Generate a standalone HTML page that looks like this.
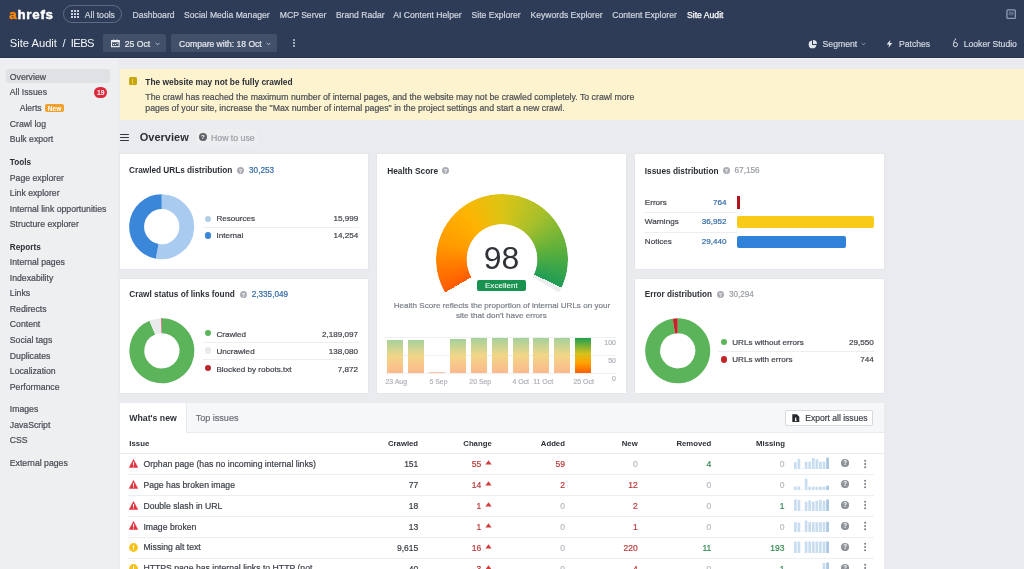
<!DOCTYPE html>
<html><head><meta charset="utf-8"><style>
html,body{margin:0;padding:0;}
body{width:1024px;height:569px;overflow:hidden;position:relative;font-family:"Liberation Sans", sans-serif;background:#e9ebee;}
.t{position:absolute;white-space:nowrap;line-height:1;-webkit-text-stroke-width:0.2px;}
</style></head><body>
<div style="position:absolute;left:0;top:0;width:1024px;height:569px;will-change:transform;">
<div style="position:absolute;left:0.00px;top:58.00px;width:118.00px;height:511.00px;background:#eeeff1;"></div>
<div style="position:absolute;left:118.00px;top:58.00px;width:906.00px;height:511.00px;background:#e9ebee;"></div>
<div style="position:absolute;left:0.00px;top:0.00px;width:1024.00px;height:58.00px;background:#2f3c57;"></div>
<div style="position:absolute;left:0.00px;top:57.00px;width:1024.00px;height:1.00px;background:#27324a;"></div>
<div style="position:absolute;left:0.00px;top:58.00px;width:1024.00px;height:1.00px;background:#f3f4f6;"></div>
<div class="t" style="left:9.30px;top:7.94px;font-size:13.3px;color:#ffffff;font-weight:700;-webkit-text-stroke-width:0;letter-spacing:0.75px;-webkit-text-stroke:0.45px #fff;"><span style="color:#ff8a00;-webkit-text-stroke:0.45px #ff8a00">a</span>hrefs</div>
<div style="position:absolute;left:63.20px;top:5.20px;width:59.20px;height:18.10px;border:1px solid #5f6b85;border-radius:10px;box-sizing:border-box;"></div>
<div style="position:absolute;left:71.20px;top:10.40px;width:2.10px;height:2.10px;background:#c9cfdb;"></div>
<div style="position:absolute;left:71.20px;top:13.40px;width:2.10px;height:2.10px;background:#c9cfdb;"></div>
<div style="position:absolute;left:71.20px;top:16.40px;width:2.10px;height:2.10px;background:#c9cfdb;"></div>
<div style="position:absolute;left:74.20px;top:10.40px;width:2.10px;height:2.10px;background:#c9cfdb;"></div>
<div style="position:absolute;left:74.20px;top:13.40px;width:2.10px;height:2.10px;background:#c9cfdb;"></div>
<div style="position:absolute;left:74.20px;top:16.40px;width:2.10px;height:2.10px;background:#c9cfdb;"></div>
<div style="position:absolute;left:77.20px;top:10.40px;width:2.10px;height:2.10px;background:#c9cfdb;"></div>
<div style="position:absolute;left:77.20px;top:13.40px;width:2.10px;height:2.10px;background:#c9cfdb;"></div>
<div style="position:absolute;left:77.20px;top:16.40px;width:2.10px;height:2.10px;background:#c9cfdb;"></div>
<div class="t" style="left:84.80px;top:10.82px;font-size:8.6px;color:#d0d6e0;">All tools</div>
<div class="t" style="left:132.50px;top:11.32px;font-size:8.6px;color:#d0d6e0;">Dashboard</div>
<div class="t" style="left:184.10px;top:11.32px;font-size:8.6px;color:#d0d6e0;">Social Media Manager</div>
<div class="t" style="left:279.80px;top:11.32px;font-size:8.6px;color:#d0d6e0;">MCP Server</div>
<div class="t" style="left:335.90px;top:11.32px;font-size:8.6px;color:#d0d6e0;">Brand Radar</div>
<div class="t" style="left:393.30px;top:11.32px;font-size:8.6px;color:#d0d6e0;">AI Content Helper</div>
<div class="t" style="left:471.50px;top:11.32px;font-size:8.6px;color:#d0d6e0;">Site Explorer</div>
<div class="t" style="left:530.50px;top:11.32px;font-size:8.6px;color:#d0d6e0;">Keywords Explorer</div>
<div class="t" style="left:612.30px;top:11.32px;font-size:8.6px;color:#d0d6e0;">Content Explorer</div>
<div class="t" style="left:687.00px;top:11.28px;font-size:8.65px;color:#ffffff;-webkit-text-stroke:0.25px #fff;">Site Audit</div>
<svg style="position:absolute;left:1006.2px;top:8.8px" width="11" height="11" viewBox="0 0 11 11"><rect x="0.95" y="0.95" width="8.4" height="8.4" rx="0.9" fill="none" stroke="#8f9cb8" stroke-width="1.3"/><path d="M2.6 2.6 H7.7 V6.3 H5.8 L5.15 7.1 L4.5 6.3 H2.6 Z" fill="#8f9cb8" opacity="0.45"/></svg>
<div class="t" style="left:9.70px;top:38.42px;font-size:11.2px;color:#f4f6f9;-webkit-text-stroke-width:0;">Site Audit</div>
<div class="t" style="left:62.60px;top:38.42px;font-size:11.2px;color:#f4f6f9;-webkit-text-stroke-width:0;">/</div>
<div class="t" style="left:70.80px;top:38.42px;font-size:11.2px;color:#f4f6f9;letter-spacing:-0.6px;-webkit-text-stroke-width:0;">IEBS</div>
<div style="position:absolute;left:103.20px;top:34.40px;width:62.60px;height:17.90px;background:#435069;border-radius:2px;"></div>
<div style="position:absolute;left:170.90px;top:34.40px;width:106.60px;height:17.90px;background:#435069;border-radius:2px;"></div>
<svg style="position:absolute;left:110.8px;top:38.6px" width="9" height="9" viewBox="0 0 9 9"><rect x="0.55" y="1.75" width="7.6" height="5.9" fill="none" stroke="#eef1f5" stroke-width="1.1"/><rect x="0" y="1.2" width="8.7" height="2" fill="#eef1f5"/><rect x="2.3" y="0.4" width="0.9" height="1.2" fill="#eef1f5"/><rect x="5.6" y="0.4" width="0.9" height="1.2" fill="#eef1f5"/><rect x="2.1" y="4.9" width="1" height="1.1" fill="#eef1f5"/><rect x="3.9" y="4.9" width="1" height="1.1" fill="#eef1f5"/><rect x="5.7" y="3.9" width="1" height="1" fill="#eef1f5"/></svg>
<div class="t" style="left:124.70px;top:40.14px;font-size:8.7px;color:#e6e9ef;">25 Oct</div>
<svg style="position:absolute;left:154.5px;top:41.8px" width="5" height="4" viewBox="0 0 5 4"><path d="M0.7 1 L2.5 2.8 L4.3 1" fill="none" stroke="#c9cfdb" stroke-width="0.9"/></svg>
<div class="t" style="left:179.10px;top:40.26px;font-size:8.55px;color:#e6e9ef;">Compare with: 18 Oct</div>
<svg style="position:absolute;left:266px;top:41.8px" width="5" height="4" viewBox="0 0 5 4"><path d="M0.7 1 L2.5 2.8 L4.3 1" fill="none" stroke="#c9cfdb" stroke-width="0.9"/></svg>
<div style="position:absolute;left:293.20px;top:38.80px;width:2.00px;height:2.00px;background:#c9cfdb;border-radius:1px;"></div>
<div style="position:absolute;left:293.20px;top:42.00px;width:2.00px;height:2.00px;background:#c9cfdb;border-radius:1px;"></div>
<div style="position:absolute;left:293.20px;top:45.20px;width:2.00px;height:2.00px;background:#c9cfdb;border-radius:1px;"></div>
<svg style="position:absolute;left:808px;top:39.5px" width="9" height="9" viewBox="0 0 9 9"><path d="M4 0.6 A3.9 3.9 0 1 0 8.4 5 L4 5 Z" fill="#dfe3ea"/><path d="M5 0 A4 4 0 0 1 9 4 L5 4 Z" fill="#dfe3ea"/></svg>
<div class="t" style="left:822.50px;top:40.24px;font-size:8.7px;color:#d0d6e0;">Segment</div>
<svg style="position:absolute;left:860.5px;top:42px" width="5" height="4" viewBox="0 0 5 4"><path d="M0.7 1 L2.5 2.8 L4.3 1" fill="none" stroke="#9aa3b6" stroke-width="0.9"/></svg>
<svg style="position:absolute;left:886.2px;top:39.8px" width="7" height="8" viewBox="0 0 7 8"><path d="M4.3 0 L0.6 4.6 H3.1 L2.4 7.8 L6.4 3.1 H3.9 Z" fill="#dfe3ea"/></svg>
<div class="t" style="left:899.00px;top:40.28px;font-size:8.65px;color:#d0d6e0;">Patches</div>
<svg style="position:absolute;left:951.8px;top:38.2px" width="7" height="10" viewBox="0 0 7 10"><circle cx="3.4" cy="6.6" r="2.1" fill="none" stroke="#dfe3ea" stroke-width="1.0"/><path d="M2.0 4.9 C1.4 3.4 2.4 2.2 3.6 1.6 M3.4 0.5 V2.0" fill="none" stroke="#dfe3ea" stroke-width="0.9"/></svg>
<div class="t" style="left:963.70px;top:40.28px;font-size:8.65px;color:#d0d6e0;">Looker Studio</div>
<div style="position:absolute;left:5.60px;top:68.90px;width:104.00px;height:14.40px;background:#dfe1e5;border-radius:3px;"></div>
<div class="t" style="left:9.80px;top:72.74px;font-size:8.7px;color:#464b53;">Overview</div>
<div class="t" style="left:9.80px;top:88.04px;font-size:8.7px;color:#464b53;">All Issues</div>
<div class="t" style="left:9.80px;top:120.04px;font-size:8.7px;color:#464b53;">Crawl log</div>
<div class="t" style="left:9.80px;top:135.24px;font-size:8.7px;color:#464b53;">Bulk export</div>
<div class="t" style="left:9.80px;top:158.66px;font-size:8.2px;color:#2b2f36;font-weight:700;-webkit-text-stroke-width:0;">Tools</div>
<div class="t" style="left:9.80px;top:173.64px;font-size:8.7px;color:#464b53;">Page explorer</div>
<div class="t" style="left:9.80px;top:189.24px;font-size:8.7px;color:#464b53;">Link explorer</div>
<div class="t" style="left:9.80px;top:204.74px;font-size:8.7px;color:#464b53;">Internal link opportunities</div>
<div class="t" style="left:9.80px;top:220.14px;font-size:8.7px;color:#464b53;">Structure explorer</div>
<div class="t" style="left:9.80px;top:243.56px;font-size:8.2px;color:#2b2f36;font-weight:700;-webkit-text-stroke-width:0;">Reports</div>
<div class="t" style="left:9.80px;top:258.34px;font-size:8.7px;color:#464b53;">Internal pages</div>
<div class="t" style="left:9.80px;top:273.94px;font-size:8.7px;color:#464b53;">Indexability</div>
<div class="t" style="left:9.80px;top:289.34px;font-size:8.7px;color:#464b53;">Links</div>
<div class="t" style="left:9.80px;top:305.24px;font-size:8.7px;color:#464b53;">Redirects</div>
<div class="t" style="left:9.80px;top:320.44px;font-size:8.7px;color:#464b53;">Content</div>
<div class="t" style="left:9.80px;top:335.74px;font-size:8.7px;color:#464b53;">Social tags</div>
<div class="t" style="left:9.80px;top:351.64px;font-size:8.7px;color:#464b53;">Duplicates</div>
<div class="t" style="left:9.80px;top:367.04px;font-size:8.7px;color:#464b53;">Localization</div>
<div class="t" style="left:9.80px;top:382.64px;font-size:8.7px;color:#464b53;">Performance</div>
<div class="t" style="left:9.80px;top:405.04px;font-size:8.7px;color:#464b53;">Images</div>
<div class="t" style="left:9.80px;top:420.64px;font-size:8.7px;color:#464b53;">JavaScript</div>
<div class="t" style="left:9.80px;top:436.04px;font-size:8.7px;color:#464b53;">CSS</div>
<div class="t" style="left:9.80px;top:458.84px;font-size:8.7px;color:#464b53;">External pages</div>
<div class="t" style="left:19.70px;top:104.02px;font-size:8.6px;color:#464b53;">Alerts</div>
<div style="position:absolute;left:45.20px;top:104.30px;width:18.70px;height:7.80px;background:#f2a12e;border-radius:2px;"></div>
<div class="t" style="left:54.55px;transform:translateX(-50%);top:105.51px;font-size:6.6px;color:#ffffff;font-weight:700;-webkit-text-stroke-width:0;">New</div>
<div style="position:absolute;left:94.10px;top:87.20px;width:13.30px;height:10.50px;background:#dc2a3c;border-radius:6px;"></div>
<div class="t" style="left:100.80px;transform:translateX(-50%);top:90.04px;font-size:6.8px;color:#ffffff;font-weight:700;-webkit-text-stroke-width:0;">19</div>
<div style="position:absolute;left:120.00px;top:68.80px;width:904.00px;height:50.90px;background:#fdf3cf;"></div>
<div style="position:absolute;left:128.70px;top:77.30px;width:8.40px;height:8.20px;background:#c6a712;border-radius:1.5px;"></div>
<div style="position:absolute;left:132.40px;top:79.40px;width:1.10px;height:3.20px;background:#ecd040;"></div>
<div style="position:absolute;left:132.40px;top:83.20px;width:1.10px;height:0.80px;background:#ecd040;"></div>
<div class="t" style="left:145.30px;top:77.51px;font-size:8.37px;color:#2b2f36;font-weight:700;-webkit-text-stroke-width:0;">The website may not be fully crawled</div>
<div class="t" style="left:145.30px;top:92.80px;font-size:8.74px;color:#4a4e55;">The crawl has reached the maximum number of internal pages, and the website may not be crawled completely. To crawl more</div>
<div class="t" style="left:145.30px;top:103.67px;font-size:8.78px;color:#4a4e55;">pages of your site, increase the "Max number of internal pages" in the project settings and start a new crawl.</div>
<div style="position:absolute;left:120.30px;top:133.80px;width:8.90px;height:1.30px;background:#30343b;border-radius:0.5px;"></div>
<div style="position:absolute;left:120.30px;top:136.80px;width:8.90px;height:1.30px;background:#30343b;border-radius:0.5px;"></div>
<div style="position:absolute;left:120.30px;top:139.80px;width:8.90px;height:1.30px;background:#30343b;border-radius:0.5px;"></div>
<div class="t" style="left:139.80px;top:132.49px;font-size:11.0px;color:#2b2f36;font-weight:700;-webkit-text-stroke-width:0;">Overview</div>
<div style="position:absolute;left:196.00px;top:129.00px;width:61.00px;height:15.50px;background:#eceef0;border-radius:2px;"></div>
<svg style="position:absolute;left:198.8px;top:133.2px" width="8" height="8" viewBox="0 0 8 8"><circle cx="4" cy="4" r="4" fill="#5e6268"/><text x="4" y="6.4" font-size="6.2" font-family="Liberation Sans" font-weight="700" fill="#fff" text-anchor="middle">?</text></svg>
<div class="t" style="left:211.00px;top:133.51px;font-size:8.73px;color:#9a9ea5;">How to use</div>
<div style="position:absolute;left:119.50px;top:153.80px;width:248.60px;height:115.00px;background:#ffffff;box-shadow:0 0 0 0.6px #e1e3e6;"></div>
<div style="position:absolute;left:376.60px;top:153.80px;width:249.80px;height:238.90px;background:#ffffff;box-shadow:0 0 0 0.6px #e1e3e6;"></div>
<div style="position:absolute;left:634.80px;top:153.80px;width:249.00px;height:115.00px;background:#ffffff;box-shadow:0 0 0 0.6px #e1e3e6;"></div>
<div style="position:absolute;left:119.50px;top:279.00px;width:248.60px;height:113.70px;background:#ffffff;box-shadow:0 0 0 0.6px #e1e3e6;"></div>
<div style="position:absolute;left:634.80px;top:279.00px;width:249.00px;height:113.70px;background:#ffffff;box-shadow:0 0 0 0.6px #e1e3e6;"></div>
<div class="t" style="left:129.10px;top:166.83px;font-size:8.23px;color:#2b2f36;font-weight:700;-webkit-text-stroke-width:0;">Crawled URLs distribution</div>
<svg style="position:absolute;left:236.7px;top:166.6px" width="7" height="7" viewBox="0 0 8 8"><circle cx="4" cy="4" r="4" fill="#a9adb3"/><text x="4" y="6.4" font-size="6.2" font-family="Liberation Sans" font-weight="700" fill="#fff" text-anchor="middle">?</text></svg>
<div class="t" style="left:249.10px;top:166.80px;font-size:8.15px;color:#336aa8;">30,253</div>
<svg style="position:absolute;left:0;top:0" width="1024" height="569"><path d="M161.700 201.650 A25.05 25.05 0 1 1 157.161 251.335" fill="none" stroke="#a9cbef" stroke-width="14.899999999999999"/><path d="M157.161 251.335 A25.05 25.05 0 0 1 161.700 201.650" fill="none" stroke="#3a86d9" stroke-width="14.899999999999999"/></svg>
<div style="position:absolute;left:205.10px;top:215.50px;width:6.20px;height:6.20px;background:#b3cde6;border-radius:50%;"></div>
<div class="t" style="left:216.40px;top:215.34px;font-size:8.1px;color:#3f434a;">Resources</div>
<div class="t" style="right:665.80px;top:215.34px;font-size:8.1px;color:#3f434a;">15,999</div>
<div style="position:absolute;left:203.00px;top:226.60px;width:155.50px;height:0.80px;background:#eceef0;"></div>
<div style="position:absolute;left:205.10px;top:232.40px;width:6.20px;height:6.20px;background:#3a86d9;border-radius:50%;"></div>
<div class="t" style="left:216.40px;top:232.24px;font-size:8.1px;color:#3f434a;">Internal</div>
<div class="t" style="right:665.80px;top:232.24px;font-size:8.1px;color:#3f434a;">14,254</div>
<div class="t" style="left:129.30px;top:290.82px;font-size:8.25px;color:#2b2f36;font-weight:700;-webkit-text-stroke-width:0;">Crawl status of links found</div>
<svg style="position:absolute;left:239.6px;top:290.6px" width="7" height="7" viewBox="0 0 8 8"><circle cx="4" cy="4" r="4" fill="#a9adb3"/><text x="4" y="6.4" font-size="6.2" font-family="Liberation Sans" font-weight="700" fill="#fff" text-anchor="middle">?</text></svg>
<div class="t" style="left:251.80px;top:290.80px;font-size:8.15px;color:#336aa8;">2,335,049</div>
<svg style="position:absolute;left:0;top:0" width="1024" height="569"><path d="M161.900 325.750 A25.05 25.05 0 1 1 152.328 327.651" fill="none" stroke="#5bb35a" stroke-width="14.899999999999999"/><path d="M152.328 327.651 A25.05 25.05 0 0 1 161.381 325.755" fill="none" stroke="#e9eaec" stroke-width="14.899999999999999"/><path d="M161.381 325.755 A25.05 25.05 0 0 1 161.900 325.750" fill="none" stroke="#c0252a" stroke-width="14.899999999999999"/></svg>
<div style="position:absolute;left:205.30px;top:330.30px;width:6.20px;height:6.20px;background:#5bb35a;border-radius:50%;"></div>
<div class="t" style="left:216.40px;top:330.64px;font-size:8.1px;color:#3f434a;">Crawled</div>
<div class="t" style="right:666.00px;top:330.64px;font-size:8.1px;color:#3f434a;">2,189,097</div>
<div style="position:absolute;left:203.00px;top:342.10px;width:155.50px;height:0.80px;background:#eceef0;"></div>
<div style="position:absolute;left:205.30px;top:347.40px;width:6.20px;height:6.20px;background:#e9eaec;border-radius:50%;"></div>
<div class="t" style="left:216.40px;top:347.74px;font-size:8.1px;color:#3f434a;">Uncrawled</div>
<div class="t" style="right:666.00px;top:347.74px;font-size:8.1px;color:#3f434a;">138,080</div>
<div style="position:absolute;left:203.00px;top:358.60px;width:155.50px;height:0.80px;background:#eceef0;"></div>
<div style="position:absolute;left:205.30px;top:365.20px;width:6.20px;height:6.20px;background:#c0252a;border-radius:50%;"></div>
<div class="t" style="left:216.40px;top:365.54px;font-size:8.1px;color:#3f434a;">Blocked by robots.txt</div>
<div class="t" style="right:666.00px;top:365.54px;font-size:8.1px;color:#3f434a;">7,872</div>
<div class="t" style="left:644.80px;top:290.89px;font-size:8.16px;color:#2b2f36;font-weight:700;-webkit-text-stroke-width:0;">Error distribution</div>
<svg style="position:absolute;left:716.8px;top:290.6px" width="7" height="7" viewBox="0 0 8 8"><circle cx="4" cy="4" r="4" fill="#a9adb3"/><text x="4" y="6.4" font-size="6.2" font-family="Liberation Sans" font-weight="700" fill="#fff" text-anchor="middle">?</text></svg>
<div class="t" style="left:729.00px;top:290.80px;font-size:8.15px;color:#9a9ea5;">30,294</div>
<svg style="position:absolute;left:0;top:0" width="1024" height="569"><path d="M677.700 325.750 A25.05 25.05 0 1 1 673.844 326.049" fill="none" stroke="#5bb35a" stroke-width="14.899999999999999"/><path d="M673.844 326.049 A25.05 25.05 0 0 1 677.700 325.750" fill="none" stroke="#c0252a" stroke-width="14.899999999999999"/></svg>
<div style="position:absolute;left:721.00px;top:339.30px;width:6.20px;height:6.20px;background:#5bb35a;border-radius:50%;"></div>
<div class="t" style="left:732.20px;top:339.14px;font-size:8.1px;color:#3f434a;">URLs without errors</div>
<div class="t" style="right:150.20px;top:339.14px;font-size:8.1px;color:#3f434a;">29,550</div>
<div style="position:absolute;left:718.00px;top:350.60px;width:156.00px;height:0.80px;background:#eceef0;"></div>
<div style="position:absolute;left:721.00px;top:356.40px;width:6.20px;height:6.20px;background:#c0252a;border-radius:50%;"></div>
<div class="t" style="left:732.20px;top:356.24px;font-size:8.1px;color:#3f434a;">URLs with errors</div>
<div class="t" style="right:150.20px;top:356.24px;font-size:8.1px;color:#3f434a;">744</div>
<div class="t" style="left:644.80px;top:166.77px;font-size:8.31px;color:#2b2f36;font-weight:700;-webkit-text-stroke-width:0;">Issues distribution</div>
<svg style="position:absolute;left:722.9px;top:166.6px" width="7" height="7" viewBox="0 0 8 8"><circle cx="4" cy="4" r="4" fill="#a9adb3"/><text x="4" y="6.4" font-size="6.2" font-family="Liberation Sans" font-weight="700" fill="#fff" text-anchor="middle">?</text></svg>
<div class="t" style="left:734.60px;top:166.80px;font-size:8.15px;color:#9a9ea5;">67,156</div>
<div class="t" style="left:644.80px;top:198.74px;font-size:8.1px;color:#3f434a;">Errors</div>
<div class="t" style="right:297.40px;top:198.74px;font-size:8.1px;color:#336aa8;">764</div>
<div style="position:absolute;left:737.00px;top:196.00px;width:2.50px;height:12.70px;background:#b3131c;"></div>
<div style="position:absolute;left:644.80px;top:212.20px;width:92.20px;height:0.80px;background:#eceef0;"></div>
<div class="t" style="left:644.80px;top:218.34px;font-size:8.1px;color:#3f434a;">Warnings</div>
<div class="t" style="right:297.40px;top:218.34px;font-size:8.1px;color:#336aa8;">36,952</div>
<div style="position:absolute;left:737.00px;top:215.50px;width:136.80px;height:12.70px;background:#f9ca16;border-radius:2px;"></div>
<div style="position:absolute;left:644.80px;top:231.70px;width:92.20px;height:0.80px;background:#eceef0;"></div>
<div class="t" style="left:644.80px;top:237.84px;font-size:8.1px;color:#3f434a;">Notices</div>
<div class="t" style="right:297.40px;top:237.84px;font-size:8.1px;color:#336aa8;">29,440</div>
<div style="position:absolute;left:737.00px;top:235.60px;width:108.70px;height:12.70px;background:#2f82d8;border-radius:2px;"></div>
<div class="t" style="left:387.20px;top:166.84px;font-size:8.34px;color:#2b2f36;font-weight:700;-webkit-text-stroke-width:0;">Health Score</div>
<svg style="position:absolute;left:442.2px;top:166.8px" width="7" height="7" viewBox="0 0 8 8"><circle cx="4" cy="4" r="4" fill="#a9adb3"/><text x="4" y="6.4" font-size="6.2" font-family="Liberation Sans" font-weight="700" fill="#fff" text-anchor="middle">?</text></svg>
<div style="position:absolute;left:435.95px;top:193.70px;width:131.80px;height:131.80px;background:conic-gradient(from 240deg, #ff5a00 0deg, #ff9a00 45deg, #ffb300 80deg, #dcc415 120deg, #a9c02a 160deg, #5cb03c 200deg, #1f9c55 235.2deg, #eceef0 235.2deg, #eceef0 240deg, transparent 240deg);-webkit-mask-image:radial-gradient(circle closest-side, transparent 34.90px, #000 35.70px);mask-image:radial-gradient(circle closest-side, transparent 34.90px, #000 35.70px);border-radius:50%;"></div>
<div class="t" style="left:501.50px;transform:translateX(-50%);top:241.91px;font-size:32px;color:#2f3237;-webkit-text-stroke-width:0;">98</div>
<div style="position:absolute;left:477.20px;top:279.90px;width:48.40px;height:10.70px;background:#18934f;border-radius:2px;"></div>
<div class="t" style="left:501.40px;transform:translateX(-50%);top:281.94px;font-size:8.1px;color:#ffffff;-webkit-text-stroke-width:0.05px;">Excellent</div>
<div class="t" style="left:501.90px;transform:translateX(-50%);top:302.06px;font-size:8.08px;color:#7a7f87;">Health Score reflects the proportion of internal URLs on your</div>
<div class="t" style="left:501.40px;transform:translateX(-50%);top:311.56px;font-size:8.08px;color:#7a7f87;">site that don&#39;t have errors</div>
<div style="position:absolute;left:386.00px;top:336.60px;width:230.00px;height:0.80px;background:#eef0f2;"></div>
<div style="position:absolute;left:386.00px;top:354.80px;width:230.00px;height:0.80px;background:#eef0f2;"></div>
<div style="position:absolute;left:386.00px;top:372.80px;width:230.00px;height:0.80px;background:#eef0f2;"></div>
<div style="position:absolute;left:387.30px;top:340.00px;width:16.20px;height:33.00px;background:linear-gradient(#a5d19b, #f2d688 50%, #fbb88c);"></div>
<div style="position:absolute;left:408.30px;top:340.00px;width:16.20px;height:33.00px;background:linear-gradient(#a5d19b, #f2d688 50%, #fbb88c);"></div>
<div style="position:absolute;left:429.00px;top:372.30px;width:16.20px;height:0.90px;background:#f5c7a6;"></div>
<div style="position:absolute;left:450.20px;top:338.80px;width:16.20px;height:34.20px;background:linear-gradient(#a5d19b, #f2d688 50%, #fbb88c);"></div>
<div style="position:absolute;left:471.00px;top:337.60px;width:16.20px;height:35.40px;background:linear-gradient(#a5d19b, #f2d688 50%, #fbb88c);"></div>
<div style="position:absolute;left:491.70px;top:337.60px;width:16.20px;height:35.40px;background:linear-gradient(#a5d19b, #f2d688 50%, #fbb88c);"></div>
<div style="position:absolute;left:512.50px;top:337.60px;width:16.20px;height:35.40px;background:linear-gradient(#a5d19b, #f2d688 50%, #fbb88c);"></div>
<div style="position:absolute;left:533.30px;top:337.60px;width:16.20px;height:35.40px;background:linear-gradient(#a5d19b, #f2d688 50%, #fbb88c);"></div>
<div style="position:absolute;left:554.00px;top:337.60px;width:16.20px;height:35.40px;background:linear-gradient(#a5d19b, #f2d688 50%, #fbb88c);"></div>
<div style="position:absolute;left:574.80px;top:337.60px;width:16.30px;height:35.40px;background:linear-gradient(#20a050, #d6c21c 45%, #ffa400 70%, #ff5e00);"></div>
<div class="t" style="right:408.20px;top:340.36px;font-size:6.9px;color:#aeb2b8;">100</div>
<div class="t" style="right:408.20px;top:357.56px;font-size:6.9px;color:#aeb2b8;">50</div>
<div class="t" style="right:408.20px;top:375.76px;font-size:6.9px;color:#aeb2b8;">0</div>
<div class="t" style="left:385.50px;top:378.76px;font-size:6.9px;color:#aeb2b8;">23 Aug</div>
<div class="t" style="left:429.50px;top:378.76px;font-size:6.9px;color:#aeb2b8;">5 Sep</div>
<div class="t" style="left:469.30px;top:378.76px;font-size:6.9px;color:#aeb2b8;">20 Sep</div>
<div class="t" style="left:512.50px;top:378.76px;font-size:6.9px;color:#aeb2b8;">4 Oct</div>
<div class="t" style="left:533.30px;top:378.76px;font-size:6.9px;color:#aeb2b8;">11 Oct</div>
<div class="t" style="left:573.50px;top:378.76px;font-size:6.9px;color:#aeb2b8;">25 Oct</div>
<div style="position:absolute;left:119.50px;top:402.50px;width:764.50px;height:166.50px;background:#ffffff;"></div>
<div style="position:absolute;left:119.50px;top:402.50px;width:764.50px;height:29.90px;background:#f6f7f8;"></div>
<div style="position:absolute;left:119.50px;top:402.50px;width:764.50px;height:29.90px;background:#f6f7f8;"></div>
<div style="position:absolute;left:119.50px;top:431.80px;width:764.50px;height:0.80px;background:#e8eaed;"></div>
<div style="position:absolute;left:119.50px;top:402.50px;width:66.50px;height:30.50px;background:#ffffff;"></div>
<div style="position:absolute;left:185.80px;top:402.50px;width:0.80px;height:30.10px;background:#e8eaed;"></div>
<div class="t" style="left:129.30px;top:414.44px;font-size:8.7px;color:#2b2f36;font-weight:700;-webkit-text-stroke-width:0;">What&#39;s new</div>
<div class="t" style="left:195.70px;top:414.14px;font-size:9.05px;color:#6c7078;">Top issues</div>
<div style="position:absolute;left:785.20px;top:410.10px;width:88.30px;height:15.70px;background:#ffffff;border:0.8px solid #d6d9dd;border-radius:2px;box-sizing:border-box;"></div>
<svg style="position:absolute;left:792px;top:413.8px" width="8" height="9" viewBox="0 0 8 9"><path d="M0.3 0.3 H4.9 L7.3 2.7 V8.1 H0.3 Z" fill="#25282d"/><path d="M3.7 3.4 V6.6" stroke="#fff" stroke-width="1.1"/><circle cx="3.7" cy="6.3" r="0.9" fill="#fff"/></svg>
<div class="t" style="left:805.20px;top:414.06px;font-size:8.55px;color:#3a3f47;">Export all issues</div>
<div class="t" style="left:129.30px;top:440.10px;font-size:7.8px;color:#2b2f36;font-weight:700;-webkit-text-stroke-width:0;">Issue</div>
<div class="t" style="right:605.90px;top:440.14px;font-size:7.75px;color:#2b2f36;font-weight:700;-webkit-text-stroke-width:0;">Crawled</div>
<div class="t" style="right:532.30px;top:440.14px;font-size:7.75px;color:#2b2f36;font-weight:700;-webkit-text-stroke-width:0;">Change</div>
<div class="t" style="right:459.10px;top:440.14px;font-size:7.75px;color:#2b2f36;font-weight:700;-webkit-text-stroke-width:0;">Added</div>
<div class="t" style="right:386.30px;top:440.14px;font-size:7.75px;color:#2b2f36;font-weight:700;-webkit-text-stroke-width:0;">New</div>
<div class="t" style="right:312.70px;top:440.14px;font-size:7.75px;color:#2b2f36;font-weight:700;-webkit-text-stroke-width:0;">Removed</div>
<div class="t" style="right:239.10px;top:440.14px;font-size:7.75px;color:#2b2f36;font-weight:700;-webkit-text-stroke-width:0;">Missing</div>
<div style="position:absolute;left:119.50px;top:452.60px;width:764.50px;height:0.80px;background:#e8eaec;"></div>
<svg style="position:absolute;left:128.8px;top:458.70px" width="9" height="9" viewBox="0 0 9 9"><path d="M4.5 0.4 L8.8 8.4 H0.2 Z" fill="#e0353f" stroke="#e0353f" stroke-width="0.5" stroke-linejoin="round"/><rect x="4" y="3" width="1" height="3" fill="#fff"/><rect x="4" y="6.6" width="1" height="1" fill="#fff"/></svg>
<div class="t" style="left:143.40px;top:459.84px;font-size:8.69px;color:#3a3f47;">Orphan page (has no incoming internal links)</div>
<div class="t" style="right:605.70px;top:460.00px;font-size:8.5px;color:#3a3f47;">151</div>
<div class="t" style="right:542.70px;top:460.00px;font-size:8.5px;color:#bb3a3c;">55</div>
<svg style="position:absolute;left:485.2px;top:460.40px" width="7" height="5" viewBox="0 0 7 5"><path d="M3.5 0.3 L6.6 4.5 H0.4 Z" fill="#d33a3a"/></svg>
<div class="t" style="right:459.10px;top:460.00px;font-size:8.5px;color:#bb3a3c;">59</div>
<div class="t" style="right:386.30px;top:460.00px;font-size:8.5px;color:#b4b8bd;">0</div>
<div class="t" style="right:312.70px;top:460.00px;font-size:8.5px;color:#378a55;">4</div>
<div class="t" style="right:239.60px;top:460.00px;font-size:8.5px;color:#b4b8bd;">0</div>
<svg style="position:absolute;left:794.1px;top:455.45px" width="40" height="14" viewBox="0 0 40 14"><rect x="0.00" y="7.30" width="2.7" height="6.70" fill="#c8ddf0"/><rect x="3.58" y="3.70" width="2.7" height="10.30" fill="#c8ddf0"/><rect x="7.16" y="13.60" width="2.7" height="0.40" fill="#c8ddf0"/><rect x="10.74" y="6.70" width="2.7" height="7.30" fill="#c8ddf0"/><rect x="14.32" y="6.70" width="2.7" height="7.30" fill="#c8ddf0"/><rect x="17.90" y="3.00" width="2.7" height="11.00" fill="#c8ddf0"/><rect x="21.48" y="4.30" width="2.7" height="9.70" fill="#c8ddf0"/><rect x="25.06" y="6.70" width="2.7" height="7.30" fill="#c8ddf0"/><rect x="28.64" y="6.70" width="2.7" height="7.30" fill="#c8ddf0"/><rect x="32.22" y="2.60" width="2.7" height="11.40" fill="#a8c6e2"/></svg>
<svg style="position:absolute;left:840.8px;top:459.4px" width="8.1" height="8.1" viewBox="0 0 8 8"><circle cx="4" cy="4" r="4" fill="#8d9299"/><text x="4" y="6.4" font-size="6.2" font-family="Liberation Sans" font-weight="700" fill="#fff" text-anchor="middle">?</text></svg>
<svg style="position:absolute;left:862px;top:457.50px" width="6" height="12" viewBox="0 0 6 12"><circle cx="3.1" cy="2.7" r="1.0" fill="#767a81"/><circle cx="3.1" cy="6.0" r="1.0" fill="#767a81"/><circle cx="3.1" cy="9.3" r="1.0" fill="#767a81"/></svg>
<div style="position:absolute;left:128.20px;top:474.30px;width:745.80px;height:0.80px;background:#eceef0;"></div>
<svg style="position:absolute;left:128.8px;top:479.60px" width="9" height="9" viewBox="0 0 9 9"><path d="M4.5 0.4 L8.8 8.4 H0.2 Z" fill="#e0353f" stroke="#e0353f" stroke-width="0.5" stroke-linejoin="round"/><rect x="4" y="3" width="1" height="3" fill="#fff"/><rect x="4" y="6.6" width="1" height="1" fill="#fff"/></svg>
<div class="t" style="left:143.40px;top:480.74px;font-size:8.69px;color:#3a3f47;">Page has broken image</div>
<div class="t" style="right:605.70px;top:480.90px;font-size:8.5px;color:#3a3f47;">77</div>
<div class="t" style="right:542.70px;top:480.90px;font-size:8.5px;color:#bb3a3c;">14</div>
<svg style="position:absolute;left:485.2px;top:481.30px" width="7" height="5" viewBox="0 0 7 5"><path d="M3.5 0.3 L6.6 4.5 H0.4 Z" fill="#d33a3a"/></svg>
<div class="t" style="right:459.10px;top:480.90px;font-size:8.5px;color:#bb3a3c;">2</div>
<div class="t" style="right:386.30px;top:480.90px;font-size:8.5px;color:#bb3a3c;">12</div>
<div class="t" style="right:312.70px;top:480.90px;font-size:8.5px;color:#b4b8bd;">0</div>
<div class="t" style="right:239.60px;top:480.90px;font-size:8.5px;color:#b4b8bd;">0</div>
<svg style="position:absolute;left:794.1px;top:476.35px" width="40" height="14" viewBox="0 0 40 14"><rect x="0.00" y="10.40" width="2.7" height="3.60" fill="#c8ddf0"/><rect x="3.58" y="10.40" width="2.7" height="3.60" fill="#c8ddf0"/><rect x="7.16" y="13.60" width="2.7" height="0.40" fill="#c8ddf0"/><rect x="10.74" y="2.60" width="2.7" height="11.40" fill="#c8ddf0"/><rect x="14.32" y="10.60" width="2.7" height="3.40" fill="#c8ddf0"/><rect x="17.90" y="10.60" width="2.7" height="3.40" fill="#c8ddf0"/><rect x="21.48" y="10.60" width="2.7" height="3.40" fill="#c8ddf0"/><rect x="25.06" y="10.60" width="2.7" height="3.40" fill="#c8ddf0"/><rect x="28.64" y="10.60" width="2.7" height="3.40" fill="#c8ddf0"/><rect x="32.22" y="9.70" width="2.7" height="4.30" fill="#a8c6e2"/></svg>
<svg style="position:absolute;left:840.8px;top:480.29999999999995px" width="8.1" height="8.1" viewBox="0 0 8 8"><circle cx="4" cy="4" r="4" fill="#8d9299"/><text x="4" y="6.4" font-size="6.2" font-family="Liberation Sans" font-weight="700" fill="#fff" text-anchor="middle">?</text></svg>
<svg style="position:absolute;left:862px;top:478.40px" width="6" height="12" viewBox="0 0 6 12"><circle cx="3.1" cy="2.7" r="1.0" fill="#767a81"/><circle cx="3.1" cy="6.0" r="1.0" fill="#767a81"/><circle cx="3.1" cy="9.3" r="1.0" fill="#767a81"/></svg>
<div style="position:absolute;left:128.20px;top:495.20px;width:745.80px;height:0.80px;background:#eceef0;"></div>
<svg style="position:absolute;left:128.8px;top:500.50px" width="9" height="9" viewBox="0 0 9 9"><path d="M4.5 0.4 L8.8 8.4 H0.2 Z" fill="#e0353f" stroke="#e0353f" stroke-width="0.5" stroke-linejoin="round"/><rect x="4" y="3" width="1" height="3" fill="#fff"/><rect x="4" y="6.6" width="1" height="1" fill="#fff"/></svg>
<div class="t" style="left:143.40px;top:501.64px;font-size:8.69px;color:#3a3f47;">Double slash in URL</div>
<div class="t" style="right:605.70px;top:501.80px;font-size:8.5px;color:#3a3f47;">18</div>
<div class="t" style="right:542.70px;top:501.80px;font-size:8.5px;color:#bb3a3c;">1</div>
<svg style="position:absolute;left:485.2px;top:502.20px" width="7" height="5" viewBox="0 0 7 5"><path d="M3.5 0.3 L6.6 4.5 H0.4 Z" fill="#d33a3a"/></svg>
<div class="t" style="right:459.10px;top:501.80px;font-size:8.5px;color:#b4b8bd;">0</div>
<div class="t" style="right:386.30px;top:501.80px;font-size:8.5px;color:#bb3a3c;">2</div>
<div class="t" style="right:312.70px;top:501.80px;font-size:8.5px;color:#b4b8bd;">0</div>
<div class="t" style="right:239.60px;top:501.80px;font-size:8.5px;color:#378a55;">1</div>
<svg style="position:absolute;left:794.1px;top:497.25px" width="40" height="14" viewBox="0 0 40 14"><rect x="0.00" y="2.50" width="2.7" height="11.50" fill="#c8ddf0"/><rect x="3.58" y="2.90" width="2.7" height="11.10" fill="#c8ddf0"/><rect x="7.16" y="13.60" width="2.7" height="0.40" fill="#c8ddf0"/><rect x="10.74" y="4.60" width="2.7" height="9.40" fill="#c8ddf0"/><rect x="14.32" y="3.30" width="2.7" height="10.70" fill="#c8ddf0"/><rect x="17.90" y="4.60" width="2.7" height="9.40" fill="#c8ddf0"/><rect x="21.48" y="3.70" width="2.7" height="10.30" fill="#c8ddf0"/><rect x="25.06" y="2.90" width="2.7" height="11.10" fill="#c8ddf0"/><rect x="28.64" y="3.70" width="2.7" height="10.30" fill="#c8ddf0"/><rect x="32.22" y="2.50" width="2.7" height="11.50" fill="#a8c6e2"/></svg>
<svg style="position:absolute;left:840.8px;top:501.2px" width="8.1" height="8.1" viewBox="0 0 8 8"><circle cx="4" cy="4" r="4" fill="#8d9299"/><text x="4" y="6.4" font-size="6.2" font-family="Liberation Sans" font-weight="700" fill="#fff" text-anchor="middle">?</text></svg>
<svg style="position:absolute;left:862px;top:499.30px" width="6" height="12" viewBox="0 0 6 12"><circle cx="3.1" cy="2.7" r="1.0" fill="#767a81"/><circle cx="3.1" cy="6.0" r="1.0" fill="#767a81"/><circle cx="3.1" cy="9.3" r="1.0" fill="#767a81"/></svg>
<div style="position:absolute;left:128.20px;top:516.10px;width:745.80px;height:0.80px;background:#eceef0;"></div>
<svg style="position:absolute;left:128.8px;top:521.40px" width="9" height="9" viewBox="0 0 9 9"><path d="M4.5 0.4 L8.8 8.4 H0.2 Z" fill="#e0353f" stroke="#e0353f" stroke-width="0.5" stroke-linejoin="round"/><rect x="4" y="3" width="1" height="3" fill="#fff"/><rect x="4" y="6.6" width="1" height="1" fill="#fff"/></svg>
<div class="t" style="left:143.40px;top:522.54px;font-size:8.69px;color:#3a3f47;">Image broken</div>
<div class="t" style="right:605.70px;top:522.70px;font-size:8.5px;color:#3a3f47;">13</div>
<div class="t" style="right:542.70px;top:522.70px;font-size:8.5px;color:#bb3a3c;">1</div>
<svg style="position:absolute;left:485.2px;top:523.10px" width="7" height="5" viewBox="0 0 7 5"><path d="M3.5 0.3 L6.6 4.5 H0.4 Z" fill="#d33a3a"/></svg>
<div class="t" style="right:459.10px;top:522.70px;font-size:8.5px;color:#b4b8bd;">0</div>
<div class="t" style="right:386.30px;top:522.70px;font-size:8.5px;color:#bb3a3c;">1</div>
<div class="t" style="right:312.70px;top:522.70px;font-size:8.5px;color:#b4b8bd;">0</div>
<div class="t" style="right:239.60px;top:522.70px;font-size:8.5px;color:#b4b8bd;">0</div>
<svg style="position:absolute;left:794.1px;top:518.15px" width="40" height="14" viewBox="0 0 40 14"><rect x="0.00" y="4.20" width="2.7" height="9.80" fill="#c8ddf0"/><rect x="3.58" y="4.60" width="2.7" height="9.40" fill="#c8ddf0"/><rect x="7.16" y="13.60" width="2.7" height="0.40" fill="#c8ddf0"/><rect x="10.74" y="2.50" width="2.7" height="11.50" fill="#c8ddf0"/><rect x="14.32" y="4.20" width="2.7" height="9.80" fill="#c8ddf0"/><rect x="17.90" y="4.20" width="2.7" height="9.80" fill="#c8ddf0"/><rect x="21.48" y="4.20" width="2.7" height="9.80" fill="#c8ddf0"/><rect x="25.06" y="4.20" width="2.7" height="9.80" fill="#c8ddf0"/><rect x="28.64" y="4.20" width="2.7" height="9.80" fill="#c8ddf0"/><rect x="32.22" y="3.70" width="2.7" height="10.30" fill="#a8c6e2"/></svg>
<svg style="position:absolute;left:840.8px;top:522.1px" width="8.1" height="8.1" viewBox="0 0 8 8"><circle cx="4" cy="4" r="4" fill="#8d9299"/><text x="4" y="6.4" font-size="6.2" font-family="Liberation Sans" font-weight="700" fill="#fff" text-anchor="middle">?</text></svg>
<svg style="position:absolute;left:862px;top:520.20px" width="6" height="12" viewBox="0 0 6 12"><circle cx="3.1" cy="2.7" r="1.0" fill="#767a81"/><circle cx="3.1" cy="6.0" r="1.0" fill="#767a81"/><circle cx="3.1" cy="9.3" r="1.0" fill="#767a81"/></svg>
<div style="position:absolute;left:128.20px;top:537.00px;width:745.80px;height:0.80px;background:#eceef0;"></div>
<svg style="position:absolute;left:128.8px;top:542.60px" width="9" height="9" viewBox="0 0 9 9"><circle cx="4.5" cy="4.5" r="4.4" fill="#f4c21a"/><rect x="4" y="2.2" width="1" height="3" fill="#fff"/><rect x="4" y="5.9" width="1" height="1" fill="#fff"/></svg>
<div class="t" style="left:143.40px;top:543.44px;font-size:8.69px;color:#3a3f47;">Missing alt text</div>
<div class="t" style="right:605.70px;top:543.60px;font-size:8.5px;color:#3a3f47;">9,615</div>
<div class="t" style="right:542.70px;top:543.60px;font-size:8.5px;color:#bb3a3c;">16</div>
<svg style="position:absolute;left:485.2px;top:544.00px" width="7" height="5" viewBox="0 0 7 5"><path d="M3.5 0.3 L6.6 4.5 H0.4 Z" fill="#d33a3a"/></svg>
<div class="t" style="right:459.10px;top:543.60px;font-size:8.5px;color:#b4b8bd;">0</div>
<div class="t" style="right:386.30px;top:543.60px;font-size:8.5px;color:#bb3a3c;">220</div>
<div class="t" style="right:312.70px;top:543.60px;font-size:8.5px;color:#378a55;">11</div>
<div class="t" style="right:239.60px;top:543.60px;font-size:8.5px;color:#378a55;">193</div>
<svg style="position:absolute;left:794.1px;top:539.05px" width="40" height="14" viewBox="0 0 40 14"><rect x="0.00" y="2.50" width="2.7" height="11.50" fill="#c8ddf0"/><rect x="3.58" y="2.50" width="2.7" height="11.50" fill="#c8ddf0"/><rect x="10.74" y="2.50" width="2.7" height="11.50" fill="#c8ddf0"/><rect x="14.32" y="2.50" width="2.7" height="11.50" fill="#c8ddf0"/><rect x="17.90" y="2.50" width="2.7" height="11.50" fill="#c8ddf0"/><rect x="21.48" y="2.50" width="2.7" height="11.50" fill="#c8ddf0"/><rect x="25.06" y="2.50" width="2.7" height="11.50" fill="#c8ddf0"/><rect x="28.64" y="2.50" width="2.7" height="11.50" fill="#c8ddf0"/><rect x="32.22" y="2.50" width="2.7" height="11.50" fill="#a8c6e2"/></svg>
<svg style="position:absolute;left:840.8px;top:543.0px" width="8.1" height="8.1" viewBox="0 0 8 8"><circle cx="4" cy="4" r="4" fill="#8d9299"/><text x="4" y="6.4" font-size="6.2" font-family="Liberation Sans" font-weight="700" fill="#fff" text-anchor="middle">?</text></svg>
<svg style="position:absolute;left:862px;top:541.10px" width="6" height="12" viewBox="0 0 6 12"><circle cx="3.1" cy="2.7" r="1.0" fill="#767a81"/><circle cx="3.1" cy="6.0" r="1.0" fill="#767a81"/><circle cx="3.1" cy="9.3" r="1.0" fill="#767a81"/></svg>
<div style="position:absolute;left:128.20px;top:557.90px;width:745.80px;height:0.80px;background:#eceef0;"></div>
<svg style="position:absolute;left:128.8px;top:563.50px" width="9" height="9" viewBox="0 0 9 9"><circle cx="4.5" cy="4.5" r="4.4" fill="#f4c21a"/><rect x="4" y="2.2" width="1" height="3" fill="#fff"/><rect x="4" y="5.9" width="1" height="1" fill="#fff"/></svg>
<div class="t" style="left:143.40px;top:564.34px;font-size:8.69px;color:#3a3f47;">HTTPS page has internal links to HTTP (not</div>
<div class="t" style="right:605.70px;top:564.50px;font-size:8.5px;color:#3a3f47;">40</div>
<div class="t" style="right:542.70px;top:564.50px;font-size:8.5px;color:#bb3a3c;">3</div>
<svg style="position:absolute;left:485.2px;top:564.90px" width="7" height="5" viewBox="0 0 7 5"><path d="M3.5 0.3 L6.6 4.5 H0.4 Z" fill="#d33a3a"/></svg>
<div class="t" style="right:459.10px;top:564.50px;font-size:8.5px;color:#b4b8bd;">0</div>
<div class="t" style="right:386.30px;top:564.50px;font-size:8.5px;color:#bb3a3c;">4</div>
<div class="t" style="right:312.70px;top:564.50px;font-size:8.5px;color:#b4b8bd;">0</div>
<div class="t" style="right:239.60px;top:564.50px;font-size:8.5px;color:#378a55;">1</div>
<svg style="position:absolute;left:794.1px;top:559.95px" width="40" height="14" viewBox="0 0 40 14"><rect x="28.64" y="3.00" width="2.7" height="11.00" fill="#c8ddf0"/><rect x="32.22" y="2.50" width="2.7" height="11.50" fill="#a8c6e2"/></svg>
<svg style="position:absolute;left:840.8px;top:563.9px" width="8.1" height="8.1" viewBox="0 0 8 8"><circle cx="4" cy="4" r="4" fill="#8d9299"/><text x="4" y="6.4" font-size="6.2" font-family="Liberation Sans" font-weight="700" fill="#fff" text-anchor="middle">?</text></svg>
<svg style="position:absolute;left:862px;top:562.00px" width="6" height="12" viewBox="0 0 6 12"><circle cx="3.1" cy="2.7" r="1.0" fill="#767a81"/><circle cx="3.1" cy="6.0" r="1.0" fill="#767a81"/><circle cx="3.1" cy="9.3" r="1.0" fill="#767a81"/></svg>
</div>
</body></html>
